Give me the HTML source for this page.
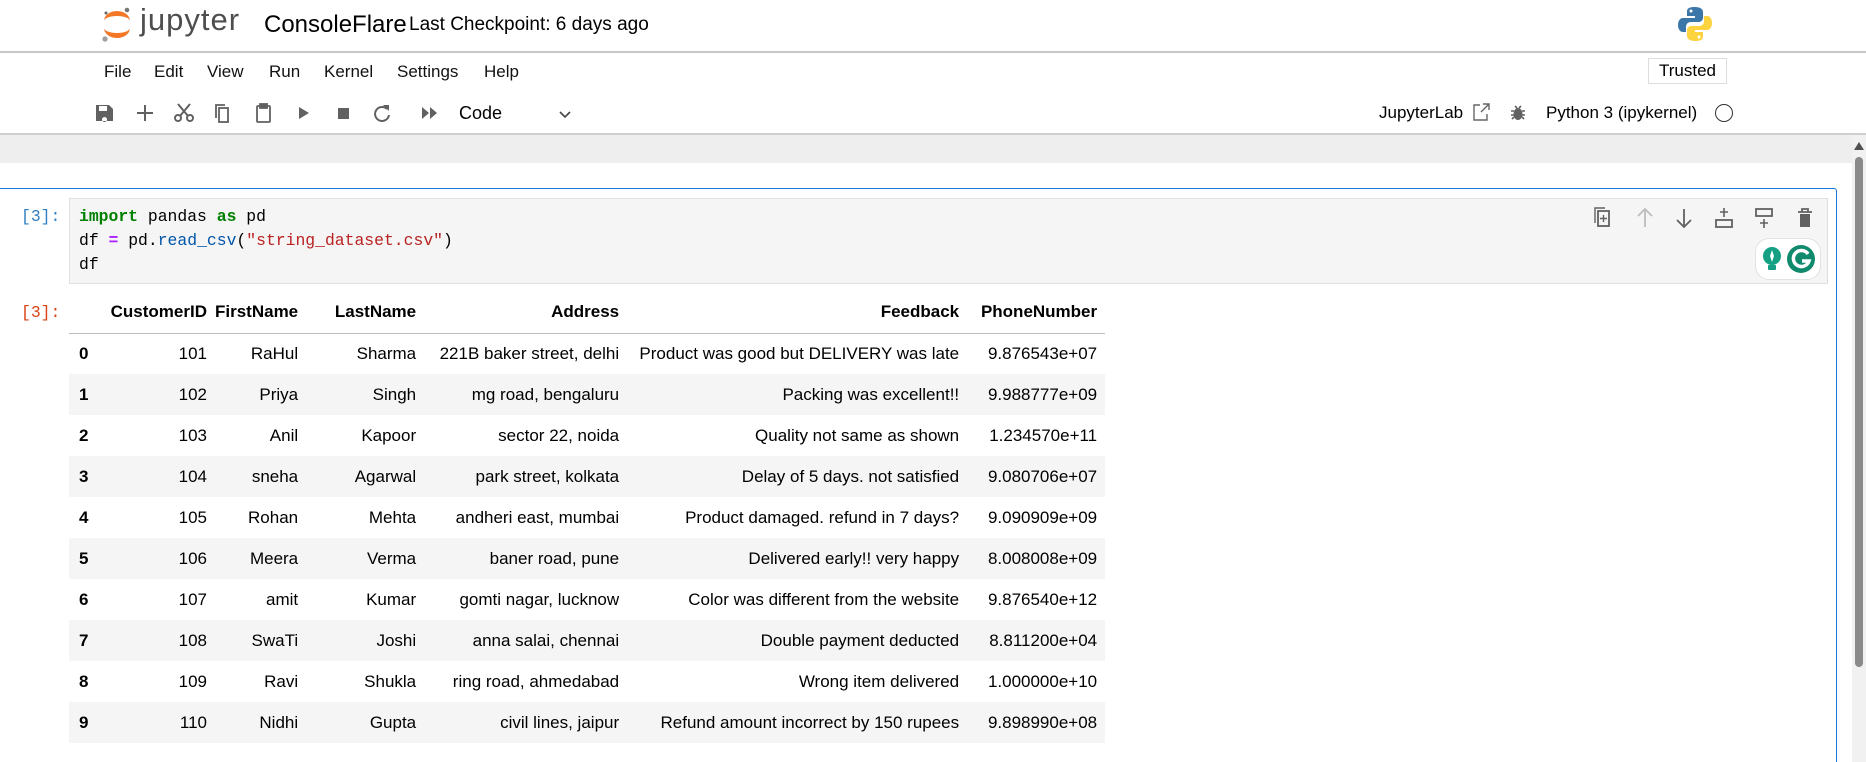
<!DOCTYPE html>
<html style="width:1866px;height:762px;overflow:hidden"><head><meta charset="utf-8"><style>
*{margin:0;padding:0;box-sizing:border-box}
body{width:1866px;height:762px;overflow:hidden;background:#fff;font-family:"Liberation Sans",sans-serif;color:#000;position:relative}
.a{position:absolute;white-space:nowrap}
.menu{font-size:17px;top:62px;color:#111}
.mono{font-family:"Liberation Mono",monospace;font-size:16.4px}
table{position:absolute;left:69px;top:292px;border-collapse:collapse;table-layout:fixed;font-size:17px}
td,th{text-align:right;height:41px;padding:0 8px 0 0;white-space:nowrap}
th{font-weight:bold}
thead th{height:41px;border-bottom:1.5px solid #bdbdbd}
td:first-child,th:first-child{text-align:left;padding-left:10px;font-weight:bold}
tbody tr:nth-child(odd){background:#fff}
tbody tr:nth-child(even){background:#f5f5f5}
.kw{color:#008000;font-weight:bold}
.fn{color:#0055aa}
.str{color:#ba2121}
.op{color:#aa22ff;font-weight:bold}
</style></head><body>
<!-- header -->
<svg class="a" style="left:101px;top:5px" width="32" height="38" viewBox="0 0 32 38">
<path d="M3 16 A13 10 0 0 1 29 16 A13 5 0 0 0 3 16Z" fill="#f37726"/>
<path d="M3 23 A13 10 0 0 0 29 23 A13 5 0 0 1 3 23Z" fill="#f37726"/>
<circle cx="26" cy="5" r="2.3" fill="#767677"/><circle cx="4" cy="34" r="2.6" fill="#9e9e9e"/><circle cx="5" cy="8" r="1.5" fill="#616262"/>
</svg>
<div class="a" style="left:140px;top:2px;font-size:31px;color:#4e4e4e;letter-spacing:1px">jupyter</div>
<div class="a" style="left:264px;top:11px;font-size:24px">ConsoleFlare</div>
<div class="a" style="left:409px;top:14px;font-size:19px">Last Checkpoint: 6 days ago</div>
<svg class="a" style="left:1678px;top:6px" width="34" height="36" viewBox="0 0 34 36">
<path d="M17 1c-8 0-8 3-8 5v4h8v2H5c-3 0-5 3-5 7s2 7 5 7h3v-5c0-3 2-5 5-5h8c2 0 4-2 4-4V6c0-3-3-5-8-5z" fill="#3b77a8"/>
<path d="M17 35c8 0 8-3 8-5v-4h-8v-2h12c3 0 5-3 5-7s-2-7-5-7h-3v5c0 3-2 5-5 5h-8c-2 0-4 2-4 4v6c0 3 3 5 8 5z" fill="#fdd340"/>
<circle cx="13" cy="5" r="1.5" fill="#fff"/><circle cx="21" cy="31" r="1.5" fill="#fff"/>
</svg>
<div class="a" style="left:0;top:51px;width:1866px;height:2px;background:#c8c8c8"></div>
<!-- menu -->
<div class="a menu" style="left:104px">File</div>
<div class="a menu" style="left:154px">Edit</div>
<div class="a menu" style="left:207px">View</div>
<div class="a menu" style="left:269px">Run</div>
<div class="a menu" style="left:324px">Kernel</div>
<div class="a menu" style="left:397px">Settings</div>
<div class="a menu" style="left:484px">Help</div>
<div class="a" style="left:1648px;top:58px;width:79px;height:26px;border:1px solid #ddd;font-size:17px;text-align:center;line-height:24px">Trusted</div>
<!-- toolbar -->
<svg class="a" style="left:94px;top:102px" width="360" height="22" viewBox="0 0 360 22" fill="#616161" stroke="#616161">
<path d="M2 3h13l4 4v12H2z M5 4h8v5H5z M10.5 15a2.5 2.5 0 1 0 0.01 0" stroke="none" fill-rule="evenodd"/>
<path d="M51 3v16M43 11h16" stroke-width="2" fill="none"/>
<g fill="none" stroke-width="2"><circle cx="84" cy="16" r="3"/><circle cx="96" cy="16" r="3"/><path d="M86 14L96 2M94 14L84 2"/></g>
<g fill="none" stroke-width="1.8"><rect x="125" y="6" width="9" height="14"/><path d="M122 16V3h9"/></g>
<g fill="none" stroke-width="1.8"><rect x="163" y="4" width="13" height="16" rx="1"/><rect x="166" y="2" width="7" height="4" fill="#616161"/></g>
<path d="M205 5l10 6-10 6z" stroke="none"/>
<rect x="244" y="6" width="11" height="11" stroke="none"/>
<path d="M293 7a7 7 0 1 0 2 6" fill="none" stroke-width="2"/><path d="M289 3h6v6z" stroke="none"/>
<path d="M328 5l7 6-7 6zM336 5l7 6-7 6z" stroke="none"/>
</svg>
<div class="a" style="left:459px;top:103px;font-size:18px">Code</div>
<svg class="a" style="left:558px;top:110px" width="14" height="10"><path d="M2 2l5 5 5-5" fill="none" stroke="#444" stroke-width="1.6"/></svg>
<div class="a" style="left:1379px;top:103px;font-size:17px">JupyterLab</div>
<svg class="a" style="left:1472px;top:102px" width="18" height="20"><path d="M8 3H2v15h13v-6M9 10l8-8M11 2h6v6" fill="none" stroke="#666" stroke-width="1.4"/></svg>
<svg class="a" style="left:1510px;top:103px" width="16" height="18" viewBox="0 0 16 18"><path d="M5 3l2 2M11 3l-2 2M1 8h3M12 8h3M1 12h3M12 12h3M2 16l2-2M14 16l-2-2" stroke="#616161" stroke-width="1.6"/><ellipse cx="8" cy="11" rx="4.5" ry="6" fill="#616161"/></svg>
<div class="a" style="left:1546px;top:103px;font-size:17px">Python 3 (ipykernel)</div>
<div class="a" style="left:1715px;top:104px;width:18px;height:18px;border:1.6px solid #333;border-radius:50%"></div>
<div class="a" style="left:0;top:133px;width:1866px;height:2px;background:#cfcfcf"></div>
<div class="a" style="left:0;top:135px;width:1852px;height:28px;background:#eeeeee"></div>
<!-- scrollbar -->
<div class="a" style="left:1852px;top:135px;width:14px;height:627px;background:#f1f1f1"></div>
<svg class="a" style="left:1853px;top:141px" width="12" height="10"><path d="M6 1l5 8H1z" fill="#505050"/></svg>
<div class="a" style="left:1855px;top:157px;width:8px;height:510px;background:#8a8a8a;border-radius:4px"></div>
<!-- cell -->
<div class="a" style="left:0;top:188px;width:1837px;height:574px;border-top:1.5px solid #1976d2;border-right:1.5px solid #1976d2;border-radius:0 3px 0 0"></div>
<div class="a" style="left:69px;top:198px;width:1759px;height:86px;background:#f5f5f5;border:1px solid #e0e0e0"></div>
<div class="a mono" style="left:21px;top:207px;color:#307fc1">[3]:</div>
<div class="a mono" style="left:79px;top:207px"><span class="kw">import</span> pandas <span class="kw">as</span> pd</div>
<div class="a mono" style="left:79px;top:231px">df <span class="op">=</span> pd<span>.</span><span class="fn">read_csv</span>(<span class="str">"string_dataset.csv"</span>)</div>
<div class="a mono" style="left:79px;top:255px">df</div>
<!-- cell toolbar -->
<svg class="a" style="left:1594px;top:206px" width="222" height="24" viewBox="0 0 222 24" fill="none" stroke="#616161" stroke-width="1.8">
<rect x="4" y="5" width="11" height="15"/><path d="M1 17V2h10M9.5 9v7M6 12.5h7" stroke-width="1.4"/>
<path d="M51 21V3M44 10l7-7 7 7" stroke="#bdbdbd"/>
<path d="M90 3v18M83 14l7 7 7-7"/>
<rect x="122" y="14" width="16" height="7"/><path d="M130 2v9M126 6h8" stroke-width="1.6"/>
<rect x="162" y="3" width="16" height="7"/><path d="M170 13v9M166 17h8" stroke-width="1.6"/>
<path d="M204 6h14M208 6V3h6v3" /><rect x="206" y="8" width="10" height="13" fill="#616161" stroke="none"/>
</svg>
<div class="a" style="left:1755px;top:238px;width:66px;height:42px;background:#fff;border:1px solid #e2e2e2;border-radius:14px"></div>
<svg class="a" style="left:1762px;top:244px" width="56" height="32" viewBox="0 0 56 32">
<circle cx="10" cy="12" r="9" fill="#15a085"/><rect x="6" y="21" width="8" height="5" rx="1" fill="#15a085"/><path d="M10 6l2 6-2 6-2-6z" fill="#fff"/>
<circle cx="39" cy="15" r="14" fill="#0f8a6c"/><path d="M46 10a8 8 0 1 0 1 7h-7" fill="none" stroke="#fff" stroke-width="3.5"/>
</svg>
<!-- output -->
<div class="a mono" style="left:21px;top:303px;color:#d84315">[3]:</div>
<table>
<colgroup><col style="width:28px"><col style="width:118px"><col style="width:87px"><col style="width:118px"><col style="width:203px"><col style="width:340px"><col style="width:138px"></colgroup>
<thead><tr><th></th><th>CustomerID</th><th>FirstName</th><th>LastName</th><th>Address</th><th>Feedback</th><th>PhoneNumber</th></tr></thead>
<tbody>
<tr><td>0</td><td>101</td><td>RaHul</td><td>Sharma</td><td>221B baker street, delhi</td><td>Product was good but DELIVERY was late</td><td>9.876543e+07</td></tr>
<tr><td>1</td><td>102</td><td>Priya</td><td>Singh</td><td>mg road, bengaluru</td><td>Packing was excellent!!</td><td>9.988777e+09</td></tr>
<tr><td>2</td><td>103</td><td>Anil</td><td>Kapoor</td><td>sector 22, noida</td><td>Quality not same as shown</td><td>1.234570e+11</td></tr>
<tr><td>3</td><td>104</td><td>sneha</td><td>Agarwal</td><td>park street, kolkata</td><td>Delay of 5 days. not satisfied</td><td>9.080706e+07</td></tr>
<tr><td>4</td><td>105</td><td>Rohan</td><td>Mehta</td><td>andheri east, mumbai</td><td>Product damaged. refund in 7 days?</td><td>9.090909e+09</td></tr>
<tr><td>5</td><td>106</td><td>Meera</td><td>Verma</td><td>baner road, pune</td><td>Delivered early!! very happy</td><td>8.008008e+09</td></tr>
<tr><td>6</td><td>107</td><td>amit</td><td>Kumar</td><td>gomti nagar, lucknow</td><td>Color was different from the website</td><td>9.876540e+12</td></tr>
<tr><td>7</td><td>108</td><td>SwaTi</td><td>Joshi</td><td>anna salai, chennai</td><td>Double payment deducted</td><td>8.811200e+04</td></tr>
<tr><td>8</td><td>109</td><td>Ravi</td><td>Shukla</td><td>ring road, ahmedabad</td><td>Wrong item delivered</td><td>1.000000e+10</td></tr>
<tr><td>9</td><td>110</td><td>Nidhi</td><td>Gupta</td><td>civil lines, jaipur</td><td>Refund amount incorrect by 150 rupees</td><td>9.898990e+08</td></tr>
</tbody></table>
</body></html>
